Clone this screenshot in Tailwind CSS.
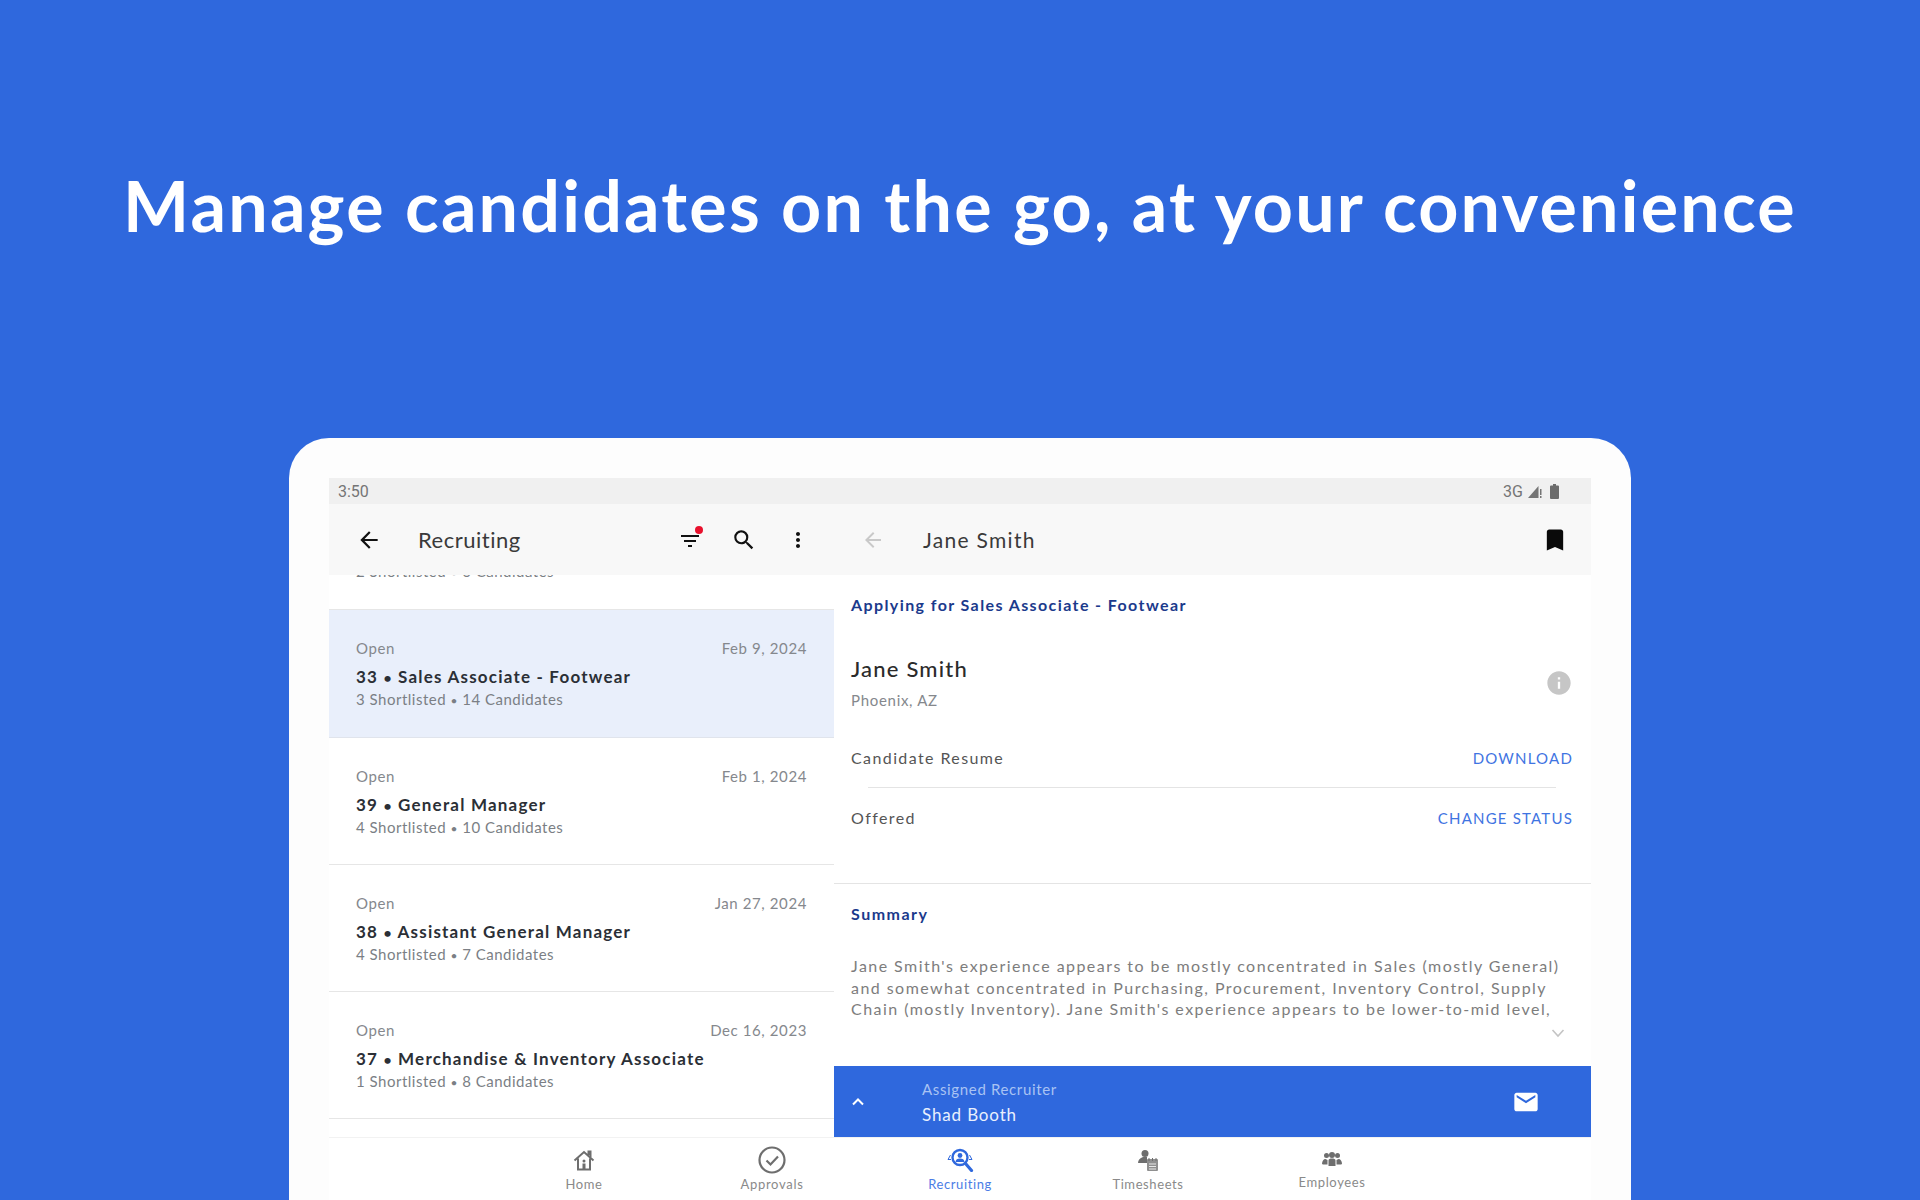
<!DOCTYPE html>
<html lang="en">
  <head>
    <meta charset="UTF-8" />
    <title>Manage candidates</title>
    <script src="https://cdn.jsdelivr.net/npm/@tailwindcss/browser@4"></script>
  </head>
  <body class="h-[1200px] w-[1920px] overflow-hidden bg-[#2f68dd] font-['Lato',sans-serif]">
    <!-- headline -->
    <div class="flex h-[438px] justify-center pt-[162px]">
      <h1 class="text-[70px] leading-[86px] font-bold tracking-[2.2px] whitespace-nowrap text-white">Manage candidates on the go, at your convenience</h1>
    </div>

    <!-- tablet frame -->
    <div class="mx-[289px] h-[762px] overflow-hidden rounded-t-[40px] bg-[#fdfdfd] px-[40px] pt-[40px]">
      <div class="flex h-[722px] flex-col bg-white">
        <!-- status bar -->
        <div class="flex h-[26px] items-center justify-between bg-[#f0f0f0] pt-px pr-[32px] pl-[9px] font-['Roboto',sans-serif] text-[16px] text-[#757575]">
          <span>3:50</span>
          <div class="flex items-center">
            <span>3G</span>
            <svg class="ml-[5px] h-[14px] w-[14px]" viewBox="0 0 14 14" fill="#757575"><path d="M10.500 1v12H0z" /><rect x="12" y="4" width="1.500" height="6" /><rect x="12" y="11" width="1.500" height="2" /></svg>
            <svg class="ml-[8px] h-[15px] w-[9px]" viewBox="0 0 9 15" fill="#6b6b6b"><path d="M3 0h3v1.500h2a1 1 0 0 1 1 1V14a1 1 0 0 1-1 1H1a1 1 0 0 1-1-1V2.500a1 1 0 0 1 1-1h2z" /></svg>
          </div>
        </div>

        <div class="flex min-h-0 flex-1">
          <!-- left pane -->
          <div class="flex w-[505px] flex-col">
            <div class="z-10 flex h-[71px] shrink-0 items-center bg-[#f8f8f8]">
              <svg class="ml-[27px] h-[26px] w-[26px]" viewBox="0 0 24 24" fill="#111"><path d="M20 11H7.830l5.590-5.590L12 4l-8 8 8 8 1.410-1.410L7.830 13H20v-2z" /></svg>
              <span class="ml-[36px] text-[22px] tracking-[0.5px] text-[#3a3a3a]">Recruiting</span>
              <div class="relative ml-[157px] h-[24px] w-[24px]">
                <svg class="h-[24px] w-[24px]" viewBox="0 0 24 24" fill="#111"><path d="M10 18h4v-2h-4v2zM3 6v2h18V6H3zm3 7h12v-2H6v2z" transform="translate(0 1)" /></svg>
                <span class="absolute top-[-2px] right-[-1px] h-[8px] w-[8px] rounded-full bg-[#e8112d]"></span>
              </div>
              <svg class="ml-[29px] h-[26px] w-[26px]" viewBox="0 0 24 24" fill="#111"><path d="M15.500 14h-.790l-.280-.270A6.471 6.471 0 0 0 16 9.500 6.500 6.500 0 1 0 9.500 16c1.610 0 3.090-.590 4.230-1.570l.270.280v.790l5 4.990L20.490 19l-4.990-5zm-6 0C7.010 14 5 11.990 5 9.500S7.010 5 9.500 5 14 7.010 14 9.500 11.990 14 9.500 14z" /></svg>
              <svg class="ml-[29px] h-[24px] w-[24px]" viewBox="0 0 24 24" fill="#111"><path d="M12 8c1.100 0 2-.9 2-2s-.9-2-2-2-2 .9-2 2 .9 2 2 2zm0 2c-1.100 0-2 .9-2 2s.9 2 2 2 2-.9 2-2-.9-2-2-2zm0 6c-1.100 0-2 .9-2 2s.9 2 2 2 2-.9 2-2-.9-2-2-2z" /></svg>
            </div>
            <div class="min-h-0 flex-1 overflow-hidden">
              <div class="-mt-[92px] h-[127.3px] border-b border-[#e6e6e6] px-[27px] pt-[28px]">
                <div class="h-[20px]"></div>
                <div class="mt-[9px] h-[20px]"></div>
                <p class="mt-[1px] text-[15px] leading-[20px] tracking-[0.5px] text-[#7b7f85]">2 Shortlisted <span class="text-[12px]">•</span> 6 Candidates</p>
              </div>
              <div class="h-[127.3px] border-b border-[#e0e4ec] bg-[#e9effb] px-[27px] pt-[28px]">
                <div class="flex justify-between text-[15px] leading-[20px] tracking-[0.6px] text-[#85888d]"><span>Open</span><span>Feb 9, 2024</span></div>
                <p class="mt-[9px] text-[17px] leading-[20px] font-bold tracking-[1.2px] text-[#2b2f36]">33 <span class="text-[14px]">•</span> Sales Associate - Footwear</p>
                <p class="mt-[1px] text-[15px] leading-[20px] tracking-[0.5px] text-[#7b7f85]">3 Shortlisted <span class="text-[12px]">•</span> 14 Candidates</p>
              </div>
              <div class="h-[127.3px] border-b border-[#e6e6e6] px-[27px] pt-[28px]">
                <div class="flex justify-between text-[15px] leading-[20px] tracking-[0.6px] text-[#85888d]"><span>Open</span><span>Feb 1, 2024</span></div>
                <p class="mt-[9px] text-[17px] leading-[20px] font-bold tracking-[1.2px] text-[#2b2f36]">39 <span class="text-[14px]">•</span> General Manager</p>
                <p class="mt-[1px] text-[15px] leading-[20px] tracking-[0.5px] text-[#7b7f85]">4 Shortlisted <span class="text-[12px]">•</span> 10 Candidates</p>
              </div>
              <div class="h-[127.3px] border-b border-[#e6e6e6] px-[27px] pt-[28px]">
                <div class="flex justify-between text-[15px] leading-[20px] tracking-[0.6px] text-[#85888d]"><span>Open</span><span>Jan 27, 2024</span></div>
                <p class="mt-[9px] text-[17px] leading-[20px] font-bold tracking-[1.2px] text-[#2b2f36]">38 <span class="text-[14px]">•</span> Assistant General Manager</p>
                <p class="mt-[1px] text-[15px] leading-[20px] tracking-[0.5px] text-[#7b7f85]">4 Shortlisted <span class="text-[12px]">•</span> 7 Candidates</p>
              </div>
              <div class="h-[127.3px] border-b border-[#e6e6e6] px-[27px] pt-[28px]">
                <div class="flex justify-between text-[15px] leading-[20px] tracking-[0.6px] text-[#85888d]"><span>Open</span><span>Dec 16, 2023</span></div>
                <p class="mt-[9px] text-[17px] leading-[20px] font-bold tracking-[1.2px] text-[#2b2f36]">37 <span class="text-[14px]">•</span> Merchandise &amp; Inventory Associate</p>
                <p class="mt-[1px] text-[15px] leading-[20px] tracking-[0.5px] text-[#7b7f85]">1 Shortlisted <span class="text-[12px]">•</span> 8 Candidates</p>
              </div>
            </div>
          </div>

          <!-- right pane -->
          <div class="flex min-w-0 flex-1 flex-col">
            <div class="flex h-[71px] shrink-0 items-center bg-[#f8f8f8]">
              <svg class="ml-[27px] h-[24px] w-[24px]" viewBox="0 0 24 24" fill="#c9c9c9"><path d="M20 11H7.830l5.590-5.590L12 4l-8 8 8 8 1.410-1.410L7.830 13H20v-2z" /></svg>
              <span class="ml-[38px] text-[21px] tracking-[1.3px] text-[#3a3a3a]">Jane Smith</span>
              <svg class="mr-[22px] ml-auto h-[28px] w-[28px]" viewBox="0 0 24 24" fill="#0a0a0a"><path d="M17 3H7c-1.100 0-2 .9-2 2v16l7-3 7 3V5c0-1.100-.9-2-2-2z" /></svg>
            </div>
            <div class="min-h-0 flex-1 overflow-hidden bg-white">
              <div class="pt-[20px] pr-[18px] pl-[17px]">
                <p class="text-[16px] leading-[20px] font-bold tracking-[1.4px] text-[#1b3a8c]">Applying for Sales Associate - Footwear</p>
                <div class="mt-[40px] flex items-center justify-between">
                  <div>
                    <p class="text-[22px] leading-[28px] font-medium tracking-[1.2px] text-[#2b2b2b]">Jane Smith</p>
                    <p class="mt-[7px] text-[15px] leading-[20px] tracking-[0.7px] text-[#85888d]">Phoenix, AZ</p>
                  </div>
                  <svg class="h-[28px] w-[28px]" viewBox="0 0 24 24" fill="#c6c6c6"><path d="M12 2C6.480 2 2 6.480 2 12s4.480 10 10 10 10-4.480 10-10S17.520 2 12 2zm1 15h-2v-6h2v6zm0-8h-2V7h2v2z" /></svg>
                </div>
                <div class="mt-[38px] flex justify-between leading-[20px]">
                  <span class="text-[16px] tracking-[1.4px] text-[#555]">Candidate Resume</span>
                  <span class="text-[15px] tracking-[1.2px] text-[#3f74e2]">DOWNLOAD</span>
                </div>
                <div class="mx-[17px] mt-[19px] h-px bg-[#e4e4e4]"></div>
                <div class="mt-[20px] flex justify-between leading-[20px]">
                  <span class="text-[16px] tracking-[1.4px] text-[#555]">Offered</span>
                  <span class="text-[15px] tracking-[1.2px] text-[#3f74e2]">CHANGE STATUS</span>
                </div>
              </div>
              <div class="mt-[55px] h-px bg-[#e4e4e4]"></div>
              <div class="pr-[18px] pl-[17px]">
                <p class="mt-[20px] text-[16px] leading-[20px] font-bold tracking-[1.5px] text-[#1b3a8c]">Summary</p>
                <p class="mt-[31px] text-[16px] leading-[21.7px] tracking-[1.45px] whitespace-nowrap text-[#7d7d7d]">Jane Smith's experience appears to be mostly concentrated in Sales (mostly General)<br />and somewhat concentrated in Purchasing, Procurement, Inventory Control, Supply<br />Chain (mostly Inventory). Jane Smith's experience appears to be lower-to-mid level,</p>
                <div class="flex justify-end pr-[7px]">
                  <svg class="mt-[5px] h-[16px] w-[16px]" viewBox="0 0 16 16" fill="none" stroke="#c4c4c4" stroke-width="1.600"><path d="M2.500 5l5.500 6 5.500-6" /></svg>
                </div>
              </div>
            </div>
            <!-- assigned recruiter -->
            <div class="flex h-[71px] shrink-0 items-center bg-[#2f68dd]">
              <svg class="ml-[16px] h-[16px] w-[16px]" viewBox="0 0 16 16" fill="none" stroke="#fff" stroke-width="2"><path d="M3 10.500l5-5 5 5" /></svg>
              <div class="ml-[56px]">
                <p class="text-[15px] leading-[20px] tracking-[0.65px] text-[#a9c3f3]">Assigned Recruiter</p>
                <p class="mt-[6px] text-[17px] leading-[20px] tracking-[0.85px] text-[#e9f0fd]">Shad Booth</p>
              </div>
              <svg class="mr-[51px] ml-auto h-[28px] w-[28px]" viewBox="0 0 24 24" fill="#fff"><path d="M20 4H4c-1.100 0-1.990.9-1.990 2L2 18c0 1.100.9 2 2 2h16c1.100 0 2-.9 2-2V6c0-1.100-.9-2-2-2zm0 4l-8 5-8-5V6l8 5 8-5v2z" /></svg>
            </div>
          </div>
        </div>

        <!-- bottom nav -->
        <div class="flex h-[63px] shrink-0 border-t border-[#f2f2f2] bg-white pl-[161px]">
          <div class="flex w-[188px] flex-col items-center pt-[11px]">
            <svg class="h-[22px] w-[22px]" viewBox="0 0 22 22" fill="none" stroke="#6e6e6e" stroke-width="2"><path d="M1.500 11.500L11 3l9.500 8.500M5 9.500V20.500H17V9.500M15.500 6V2.500H17.500V8" /><circle cx="11" cy="12" r="1.500" fill="#6e6e6e" stroke="none" /><rect x="9.500" y="14.500" width="3" height="6" fill="#6e6e6e" stroke="none" /></svg>
            <span class="mt-[4px] text-[13px] leading-[18px] tracking-[0.6px] text-[#8a8a8a]">Home</span>
          </div>
          <div class="flex w-[188px] flex-col items-center pt-[8px]">
            <svg class="h-[28px] w-[28px]" viewBox="0 0 28 28" fill="none" stroke="#6e6e6e"><circle cx="14" cy="14" r="12.500" stroke-width="2.200" /><path d="M8.500 14.500l4 4 7.500-8" stroke-width="2.200" /></svg>
            <span class="mt-[1px] text-[13px] leading-[18px] tracking-[0.7px] text-[#8a8a8a]">Approvals</span>
          </div>
          <div class="flex w-[188px] flex-col items-center pt-[10px]">
            <svg class="h-[24px] w-[28px]" viewBox="0 0 28 24" fill="none" stroke="#2f68dd"><circle cx="14" cy="9.500" r="7.500" stroke-width="2.400" /><path d="M19.500 15.500l6 7" stroke-width="3.200" stroke-linecap="round" /><circle cx="14" cy="7.500" r="2.400" fill="#2f68dd" stroke="none" /><path d="M9.500 14c0-2.500 2-3.500 4.500-3.500s4.500 1 4.500 3.500z" fill="#2f68dd" stroke="none" /><path d="M4.500 7L2 11.500h3M23.500 7l2.500 4.500h-3" stroke-width="1" /></svg>
            <span class="mt-[3px] text-[13px] leading-[18px] tracking-[0.6px] text-[#4b7de6]">Recruiting</span>
          </div>
          <div class="flex w-[188px] flex-col items-center pt-[11px]">
            <svg class="h-[22px] w-[22px]" viewBox="0 0 22 22" fill="#6e6e6e"><circle cx="8" cy="4.500" r="3.500" /><path d="M6 8h4v3l1 1v2H1c0-3 2-5 5-6z" /><rect x="10" y="10" width="11" height="12" rx="1" fill="#8f8f8f" /><path d="M12 9v3M15.500 9v3M19 9v3" stroke="#6e6e6e" stroke-width="1" /><path d="M12 15h7M12 17.500h7M12 20h7" stroke="#e8e8e8" stroke-width="1" /></svg>
            <span class="mt-[4px] text-[13px] leading-[18px] tracking-[0.6px] text-[#8a8a8a]">Timesheets</span>
          </div>
          <div class="-ml-[4px] flex w-[188px] flex-col items-center pt-[14px]">
            <svg class="h-[14px] w-[20px]" viewBox="0 0 20 14" fill="#6e6e6e"><circle cx="4.500" cy="3.500" r="2.500" /><circle cx="15.500" cy="3.500" r="2.500" /><circle cx="10" cy="3" r="3" /><path d="M0 12c0-3 1.500-5 3.500-5L5.500 8v4.500H1zM20 12c0-3-1.500-5-3.500-5L14.500 8v4.500H19zM6.500 14V8.500C6.500 7 8 6.500 10 6.500s3.500.5 3.500 2V14z" /></svg>
            <span class="mt-[7px] text-[13px] leading-[18px] tracking-[0.6px] text-[#8a8a8a]">Employees</span>
          </div>
        </div>
      </div>
    </div>
  </body>
</html>
